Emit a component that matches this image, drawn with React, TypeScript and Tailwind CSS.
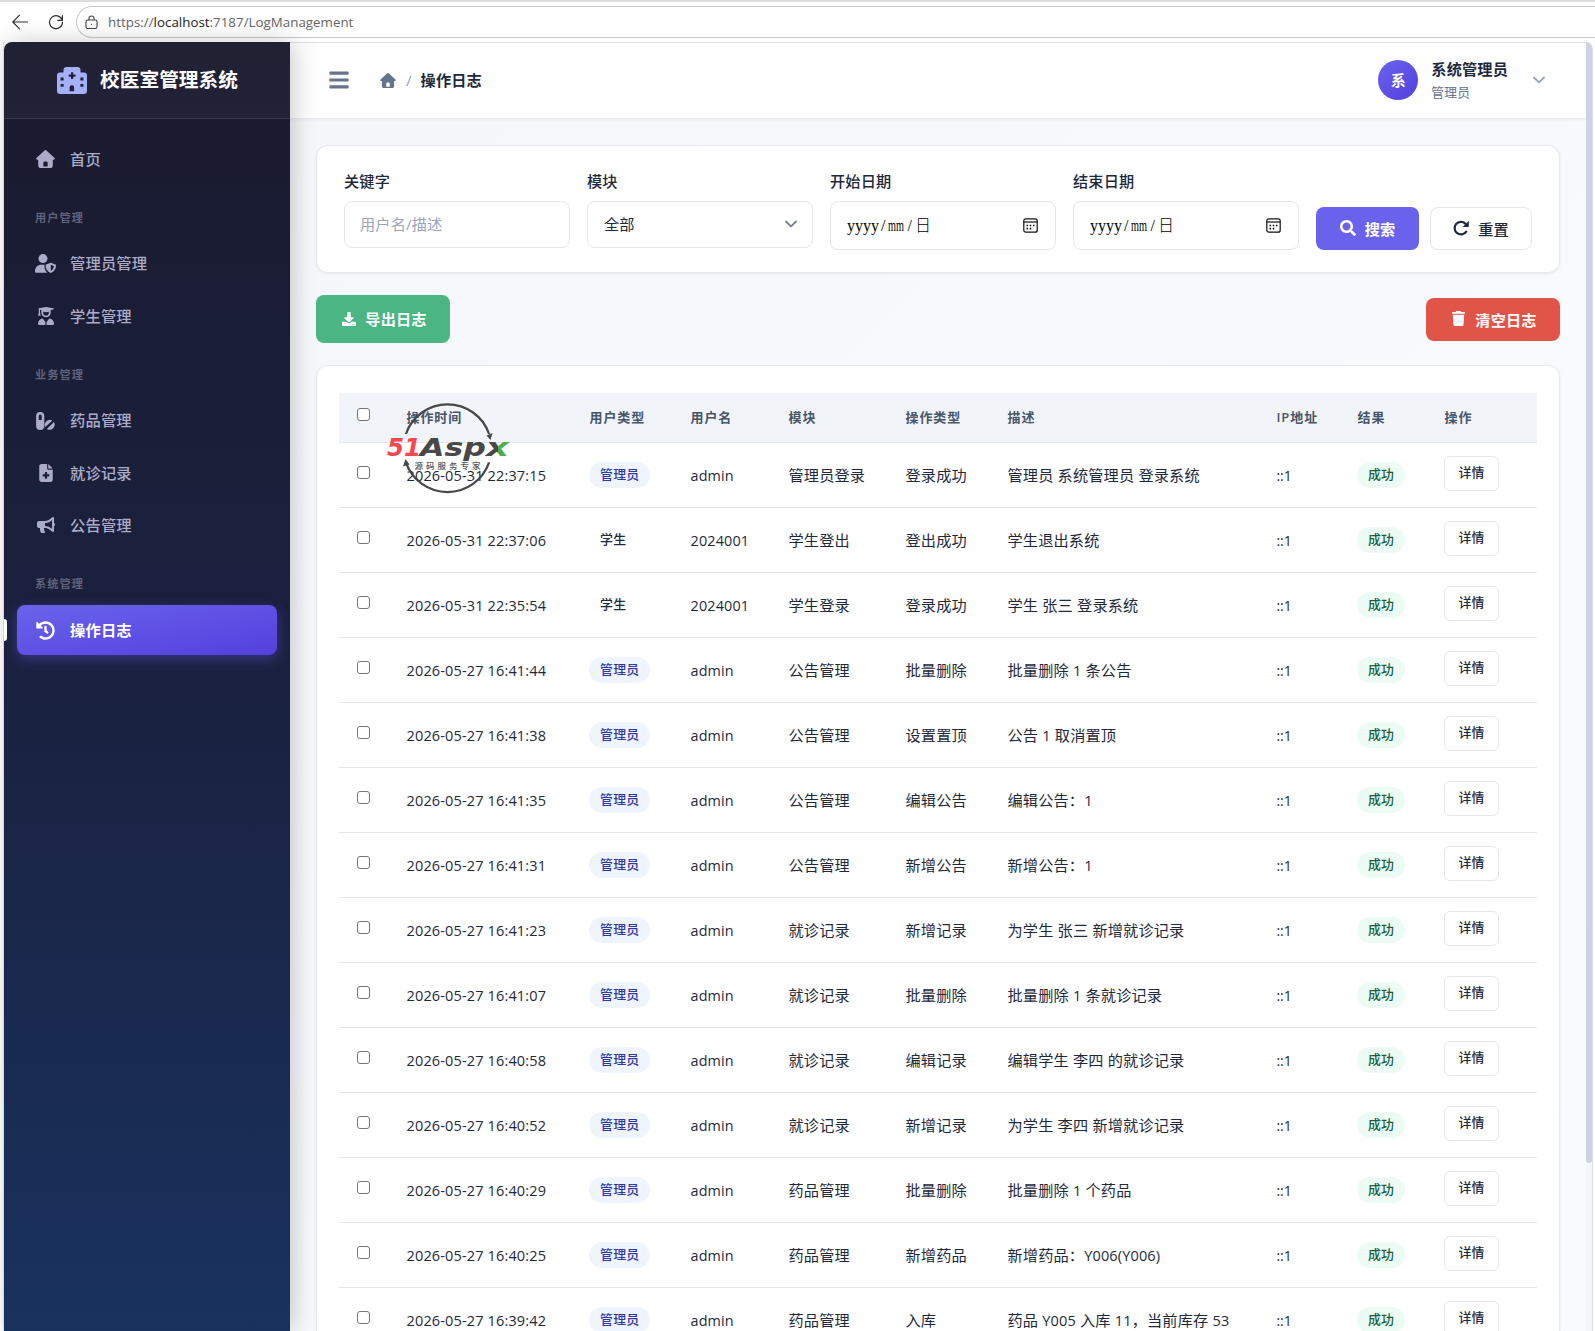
import type { ReactNode } from 'react'
import { FaBars, FaBullhorn, FaDownload, FaHistory, FaSearch } from 'react-icons/fa'
import { FaFileMedical, FaTrash } from 'react-icons/fa6'

type NavEntry = { icon: ReactNode; label: string; active?: boolean }

function HouseIcon({ className }: { className?: string }) {
  return (
    <svg className={className} viewBox="0 0 19 18" fill="currentColor" fillRule="evenodd">
      <path d="M8.600.4a1.300 1.300 0 0 1 1.800 0l8 7.300c.9.8.3 2-.7 2h-.9v6.100a2.200 2.200 0 0 1-2.200 2.200H4.400a2.200 2.200 0 0 1-2.200-2.200V9.700h-.9c-1 0-1.600-1.200-.7-2zM8.400 11.500a1 1 0 0 0-1 1v3.900h4.200v-3.900a1 1 0 0 0-1-1z" />
    </svg>
  )
}

function HospitalIcon() {
  return (
    <svg className="h-[27px] w-[30px] text-[#a5b0fb]" viewBox="0 0 30 27" fill="currentColor" fillRule="evenodd">
      <path d="M6.500 3.300A3.300 3.300 0 0 1 9.800 0h10.400a3.300 3.300 0 0 1 3.300 3.300V5.500h3.200A3.300 3.300 0 0 1 30 8.800v14.900a3.300 3.300 0 0 1-3.300 3.300H3.300A3.300 3.300 0 0 1 0 23.700V8.800a3.300 3.300 0 0 1 3.300-3.300h3.200zM14 5.200v2.300h-2.300v2.200H14V12h2.200V9.700h2.300V7.500h-2.300V5.200zM3.600 10.600v2.800h3v-2.800zM23.400 10.600v2.800h3v-2.800zM3.600 17v2.800h3V17zM23.400 17v2.800h3V17zM14.800 18.200a2.200 2.200 0 0 0-2.200 2.200v3.800h4.500v-3.800a2.200 2.200 0 0 0-2.300-2.200z" />
    </svg>
  )
}

function UserShieldIcon() {
  return (
    <svg className="h-[19px] w-[21px]" viewBox="0 0 21 19" fill="currentColor" fillRule="evenodd">
      <circle cx="8" cy="4.600" r="4.500" />
      <path d="M0 17.400c0-4 2.600-6.600 6.300-6.600h3.200v1.500c0 2.700.9 4.800 2.700 6.400H1.200C.5 18.700 0 18.200 0 17.400z" />
      <path d="M15.800 8.800l4.600 1.700c.4.100.6.500.6.900 0 3.400-1.800 6.100-5.200 7.600-3.400-1.500-5.200-4.200-5.200-7.600 0-.4.200-.8.600-.9zM15.800 10.800v6.100c1.900-1.100 2.900-2.600 3.100-4.900z" />
    </svg>
  )
}

function UserGraduateIcon() {
  return (
    <svg className="h-[18px] w-4" viewBox="0 0 16 18" fill="currentColor" fillRule="evenodd">
      <path d="M8 0l7.400 1.200c.7.200.7 1 0 1.200l-2.700.6v2.600a4.700 4.700 0 0 1-9.400 0V3l-1.300-.3v2.500l.7 3.600H.1l.7-3.600V2.400C.2 2.200.2 1.400.8 1.200zM5.200 4.800v1a2.800 2.800 0 0 0 5.600 0v-1c-1.900.5-3.700.5-5.600 0z" />
      <path d="M4.700 11.500L7.400 15v3H1.200A1.200 1.200 0 0 1 0 16.800c0-2.900 1.900-5 4.700-5.300zM11.300 11.500L8.600 15v3h6.200a1.200 1.200 0 0 0 1.200-1.200c0-2.900-1.900-5-4.700-5.300z" />
    </svg>
  )
}

function PillsIcon() {
  return (
    <svg className="h-[18px] w-[19px]" viewBox="0 0 19 18" fill="currentColor" fillRule="evenodd">
      <path d="M4.200 0a4.100 4.100 0 0 1 4.100 4.100v9.800a4.100 4.100 0 0 1-8.200 0V4.100A4.100 4.100 0 0 1 4.200 0zM4.200 2.600a1.500 1.500 0 0 0-1.500 1.500v4h3v-4a1.500 1.500 0 0 0-1.500-1.500z" />
      <path d="M9.300 15.100a5.100 5.100 0 0 1 7-6.700zM10.900 17a5.100 5.100 0 0 0 7-7z" />
    </svg>
  )
}

function ResetIcon() {
  return (
    <svg className="h-4 w-4" viewBox="0 0 16 16" fill="none">
      <path d="M13.200 11.600A6.300 6.300 0 1 1 12.300 3.600" stroke="currentColor" strokeWidth="2.200" strokeLinecap="round" />
      <path d="M15.800.8v5.400a.7.700 0 0 1-.7.7H9.800z" fill="currentColor" />
    </svg>
  )
}

const groups: { title?: string; items: NavEntry[] }[] = [
  { items: [{ icon: <HouseIcon className="h-[18px] w-[19px]" />, label: '首页' }] },
  {
    title: '用户管理',
    items: [
      { icon: <UserShieldIcon />, label: '管理员管理' },
      { icon: <UserGraduateIcon />, label: '学生管理' },
    ],
  },
  {
    title: '业务管理',
    items: [
      { icon: <PillsIcon />, label: '药品管理' },
      { icon: <FaFileMedical className="text-[18px]" />, label: '就诊记录' },
      { icon: <FaBullhorn className="text-[18px]" />, label: '公告管理' },
    ],
  },
  { title: '系统管理', items: [{ icon: <FaHistory className="text-[19px]" />, label: '操作日志', active: true }] },
]

const logs = [
  { time: '2026-05-31 22:37:15', role: '管理员', user: 'admin', module: '管理员登录', action: '登录成功', desc: '管理员 系统管理员 登录系统' },
  { time: '2026-05-31 22:37:06', role: '学生', user: '2024001', module: '学生登出', action: '登出成功', desc: '学生退出系统' },
  { time: '2026-05-31 22:35:54', role: '学生', user: '2024001', module: '学生登录', action: '登录成功', desc: '学生 张三 登录系统' },
  { time: '2026-05-27 16:41:44', role: '管理员', user: 'admin', module: '公告管理', action: '批量删除', desc: '批量删除 1 条公告' },
  { time: '2026-05-27 16:41:38', role: '管理员', user: 'admin', module: '公告管理', action: '设置置顶', desc: '公告 1 取消置顶' },
  { time: '2026-05-27 16:41:35', role: '管理员', user: 'admin', module: '公告管理', action: '编辑公告', desc: '编辑公告：1' },
  { time: '2026-05-27 16:41:31', role: '管理员', user: 'admin', module: '公告管理', action: '新增公告', desc: '新增公告：1' },
  { time: '2026-05-27 16:41:23', role: '管理员', user: 'admin', module: '就诊记录', action: '新增记录', desc: '为学生 张三 新增就诊记录' },
  { time: '2026-05-27 16:41:07', role: '管理员', user: 'admin', module: '就诊记录', action: '批量删除', desc: '批量删除 1 条就诊记录' },
  { time: '2026-05-27 16:40:58', role: '管理员', user: 'admin', module: '就诊记录', action: '编辑记录', desc: '编辑学生 李四 的就诊记录' },
  { time: '2026-05-27 16:40:52', role: '管理员', user: 'admin', module: '就诊记录', action: '新增记录', desc: '为学生 李四 新增就诊记录' },
  { time: '2026-05-27 16:40:29', role: '管理员', user: 'admin', module: '药品管理', action: '批量删除', desc: '批量删除 1 个药品' },
  { time: '2026-05-27 16:40:25', role: '管理员', user: 'admin', module: '药品管理', action: '新增药品', desc: '新增药品：Y006(Y006)' },
  { time: '2026-05-27 16:39:42', role: '管理员', user: 'admin', module: '药品管理', action: '入库', desc: '药品 Y005 入库 11，当前库存 53' },
]

const headers = ['操作时间', '用户类型', '用户名', '模块', '操作类型', '描述', 'IP地址', '结果', '操作']

function BrowserBar() {
  return (
    <div className="flex h-[42px] items-start border-t-2 border-[#dcdcdc] bg-white pt-1">
      <div className="flex h-8 w-[76px] shrink-0 items-center gap-[20px] pl-3 text-[#333]">
        <svg width="16" height="16" viewBox="0 0 16 16" fill="none" stroke="currentColor" strokeWidth="1.1" strokeLinecap="round" strokeLinejoin="round">
          <path d="M15.500 8H.8M7.500 1.200.8 8l6.700 6.800" />
        </svg>
        <svg width="16" height="16" viewBox="0 0 16 16" fill="none" stroke="currentColor" strokeWidth="1.200" strokeLinecap="round" strokeLinejoin="round">
          <path d="M14.200 6.200A6.500 6.500 0 1 0 14.500 8M14.400 1.500v4.800H9.800" />
        </svg>
      </div>
      <div className="flex h-8 flex-1 items-center rounded-l-full border border-r-0 border-[#c9c9c9] pl-2">
        <svg width="13" height="15" viewBox="0 0 13 15" fill="none" stroke="#444" strokeWidth="1.1">
          <rect x="1" y="5" width="11" height="8.500" rx="1.800" />
          <path d="M4 5V3.500a2.500 2.500 0 0 1 5 0V5" />
          <circle cx="6.500" cy="9.300" r=".6" fill="#444" stroke="none" />
        </svg>
        <span className="mt-px ml-[10px] text-[13.3px] leading-none tracking-[0.03px] text-[#666]">
          https://<span className="text-[#1c1c1c]">localhost</span>:7187/LogManagement
        </span>
      </div>
    </div>
  )
}

function NavItem({ icon, label, active }: NavEntry) {
  return (
    <a
      className={
        active
          ? 'relative mx-[13px] flex h-[50px] items-center rounded-lg bg-gradient-to-br from-[#6a62ec] to-[#543fdd] pl-[17px] text-[15.3px] font-semibold tracking-[0.15px] text-white shadow-[0_4px_14px_rgba(99,91,235,0.4)]'
          : 'mx-[13px] flex h-[50px] items-center pl-[17px] text-[15.3px] font-medium tracking-[0.15px] text-[#acacc8]'
      }
    >
      {active && <span className="absolute top-[14px] -left-[13px] h-[22px] w-[3px] rounded-r bg-white" />}
      <span className="flex w-[23px] justify-center">{icon}</span>
      <span className="ml-[13px]">{label}</span>
    </a>
  )
}

function Sidebar() {
  return (
    <aside className="relative z-10 w-[286px] shrink-0 overflow-hidden rounded-tl-lg bg-gradient-to-b from-[#1a1a2e] via-[#1a2140] to-[#18325e] shadow-[4px_0_24px_rgba(0,0,0,0.2)]">
      <div className="flex h-[77px] items-center justify-center gap-[13px] border-b border-white/10 bg-white/3 pl-px">
        <HospitalIcon />
        <span className="text-[19.7px] font-bold text-white">校医室管理系统</span>
      </div>
      <nav className="pt-[15px]">
        {groups.map((group) => (
          <div key={group.title ?? group.items[0].label} className="flex flex-col gap-[2.3px]">
            {group.title && (
              <div className="flex h-[52.5px] items-end pb-[11px] pl-[31px] text-[11.2px] leading-4 font-semibold tracking-[1.1px] text-[#61627a]">
                {group.title}
              </div>
            )}
            {group.items.map((item) => (
              <NavItem key={item.label} {...item} />
            ))}
          </div>
        ))}
      </nav>
    </aside>
  )
}

function Chevron({ className }: { className?: string }) {
  return (
    <svg className={className} width="12" height="8" viewBox="0 0 12 8" fill="none" stroke="currentColor" strokeWidth="1.800" strokeLinecap="round" strokeLinejoin="round">
      <path d="M1 1.500 6 6.300l5-4.800" />
    </svg>
  )
}

function TopBar() {
  return (
    <header className="flex h-[76px] shrink-0 items-center border-b border-[#e9ebf2] bg-[#fefefe] pr-[41px] pb-px pl-[38px] shadow-[0_1px_3px_rgba(0,0,0,0.05)]">
      <FaBars className="text-[22px] text-[#64748b]" />
      <HouseIcon className="ml-[30px] h-[15px] w-4 text-[#64748b]" />
      <span className="ml-[10px] text-[15.2px] text-[#94a3b8]">/</span>
      <span className="ml-[9px] text-[15.2px] font-semibold tracking-[0.15px] text-[#1e293b]">操作日志</span>
      <div className="ml-auto flex items-center">
        <div className="flex h-10 w-10 items-center justify-center rounded-full bg-gradient-to-br from-[#6a62ec] to-[#543fdd] text-[15px] font-bold text-white">
          系
        </div>
        <div className="ml-[13px] pt-px">
          <div className="text-[15.2px] leading-[23px] font-semibold tracking-[0.15px] text-[#1e293b]">系统管理员</div>
          <div className="text-[12.8px] leading-[23px] tracking-[0.15px] text-[#64748b]">管理员</div>
        </div>
        <Chevron className="ml-[25px] text-[#94a3b8]" />
      </div>
    </header>
  )
}

function DateBox() {
  return (
    <div className="flex h-[48.5px] items-center justify-between rounded-lg border border-[#e5e7eb] pt-px pr-[17px] pl-4 font-['Liberation_Serif','Noto_Sans_CJK_SC',serif] text-[16px] tracking-normal text-black">
      <span className="flex items-center">
        <span>yyyy</span>
        <span className="ml-[2px]">/</span>
        <span className="ml-[3px] w-4">
          <span className="inline-block origin-left scale-x-[0.64]">mm</span>
        </span>
        <span className="ml-[3px]">/</span>
        <span className="ml-[3px] font-light">日</span>
      </span>
      <svg width="15" height="15" viewBox="0 0 15 15" fill="none" stroke="#111" strokeWidth="1.200">
        <rect x=".8" y=".8" width="13.400" height="13.400" rx="2" />
        <path d="M.8 4h13.400" />
        <path d="M6.700 7.500h1.600M9.900 7.500h1.600M3.500 7.500h1.600M3.500 10.600h1.600M6.700 10.600h1.600" strokeWidth="1.600" />
      </svg>
    </div>
  )
}

function Field({ label, children }: { label: string; children: ReactNode }) {
  return (
    <div className="w-[226px]">
      <div className="mb-[9px] text-[15.2px] leading-[22px] font-medium text-[#1e293b]">{label}</div>
      {children}
    </div>
  )
}

function Filters() {
  return (
    <section className="flex h-[128px] items-start gap-[17px] rounded-xl border border-[#e6e9f0] bg-white pt-6 pl-[27px] tracking-[0.15px] shadow-[0_1px_3px_rgba(0,0,0,0.07)]">
      <Field label="关键字">
        <div className="flex h-[46.5px] items-center rounded-lg border border-[#e5e7eb] pl-[15px] text-[15.2px] text-[#9aa5b8]">用户名/描述</div>
      </Field>
      <Field label="模块">
        <div className="flex h-[46.5px] items-center justify-between rounded-lg border border-[#e5e7eb] pr-[15px] pl-4 text-[15.2px] text-[#1e293b]">
          全部
          <Chevron className="text-[#777f8e]" />
        </div>
      </Field>
      <Field label="开始日期">
        <DateBox />
      </Field>
      <Field label="结束日期">
        <DateBox />
      </Field>
      <div className="mt-[37px] flex gap-[11px]">
        <button className="flex h-[43px] w-[103px] items-center justify-center gap-[9px] rounded-lg bg-[#6a62ec] text-[15.2px] font-semibold text-white">
          <FaSearch className="mb-px text-[16px]" />
          <span className="pt-[2px]">搜索</span>
        </button>
        <button className="flex h-[43px] w-[102px] items-center justify-center gap-[9px] rounded-lg border border-[#e5e7eb] bg-white text-[15.2px] font-medium text-[#1e293b]">
          <span className="mb-[2px]">
            <ResetIcon />
          </span>
          <span className="pt-[2px]">重置</span>
        </button>
      </div>
    </section>
  )
}

function Box() {
  return <span className="block h-[13px] w-[13px] rounded-[3px] border border-[#767676] bg-white" />
}

// Numbers and latin text run slightly smaller than the chinese glyphs beside them.
function Mixed({ text }: { text: string }) {
  return text.split(/([A-Za-z0-9()]+)/).map((part, i) =>
    i % 2 ? (
      <span key={i} className="text-[14.5px]">
        {part}
      </span>
    ) : (
      part
    ),
  )
}

function LogTable() {
  return (
    <table className="w-[1198px] table-fixed border-collapse text-left text-[15.2px] tracking-[0.15px] whitespace-nowrap text-[#1e293b]">
      <colgroup>
        <col className="w-[50px]" />
        <col className="w-[183px]" />
        <col className="w-[101px]" />
        <col className="w-[98px]" />
        <col className="w-[117px]" />
        <col className="w-[102px]" />
        <col className="w-[269px]" />
        <col className="w-[81px]" />
        <col className="w-[87px]" />
        <col className="w-[110px]" />
      </colgroup>
      <thead>
        <tr className="h-[49px] border-b border-[#e2e5ea] bg-[#f1f4f8] text-[13px] tracking-[0.9px] text-[#475569]">
          <th className="pb-[6px] pl-[18px]">
            <Box />
          </th>
          {headers.map((h) => (
            <th key={h} className="pl-[17.5px] font-semibold">
              {h}
            </th>
          ))}
        </tr>
      </thead>
      <tbody>
        {logs.map((log) => (
          <tr key={log.time} className="h-[65px] border-b border-[#e2e5ea]">
            <td className="pb-1 pl-[18px]">
              <Box />
            </td>
            <td className="pt-[2px] pl-[17.5px] text-[14.5px]">{log.time}</td>
            <td className="pl-[17px]">
              <span
                className={
                  log.role === '管理员'
                    ? 'inline-flex h-[26px] items-center rounded-full bg-[#eff5ff] px-[11px] align-middle text-[12.9px] font-medium tracking-[0.25px] text-[#3237a0]'
                    : 'inline-flex h-[26px] items-center px-[11px] align-middle text-[12.9px] font-medium tracking-[0.25px]'
                }
              >
                {log.role}
              </span>
            </td>
            <td className="pt-[2px] pl-[17.5px] text-[14.4px]">{log.user}</td>
            <td className="pt-px pl-[17.5px]">{log.module}</td>
            <td className="pt-px pl-[17.5px]">{log.action}</td>
            <td className="pt-px pl-[17.5px]">
              <Mixed text={log.desc} />
            </td>
            <td className="pt-[2px] pl-[17.5px] text-[14px] tracking-[-0.1px]">::1</td>
            <td className="pl-[17px]">
              <span className="inline-flex h-[26px] items-center rounded-full bg-[#ecfcf4] px-[11px] align-middle text-[12.9px] font-medium text-[#17603f]">成功</span>
            </td>
            <td className="pb-[3px] pl-[17px]">
              <button className="flex h-[35px] w-[55px] items-center justify-center rounded-md border border-[#e5e7eb] text-[12.9px] font-medium">详情</button>
            </td>
          </tr>
        ))}
      </tbody>
    </table>
  )
}

function Watermark() {
  return (
    <svg className="absolute top-[398px] left-[384px]" width="130" height="100" viewBox="0 0 130 100">
      <defs>
        <linearGradient id="letter" x1="0" x2="1" y1="0" y2="0">
          <stop offset="0.550" stopColor="#484848" />
          <stop offset="0.550" stopColor="#4fae4c" />
        </linearGradient>
      </defs>
      <g fill="none" stroke="#484848" strokeWidth="2.300">
        <path d="M21.900 36A44 44 0 0 1 105.100 36" />
        <path d="M21.900 64.400A44 44 0 0 0 105.100 64.400" />
      </g>
      <path d="M102.500 37.500 108.500 35 106.500 42ZM19 68.500 21.500 61 25.500 66.500Z" fill="#484848" />
      <g fontFamily="DejaVu Sans, sans-serif" fontWeight="700" fontStyle="italic" fontSize="25">
        <text x="3" y="58" fill="#f6474d" textLength="34" lengthAdjust="spacingAndGlyphs">
          51
        </text>
        <text x="36" y="58" fill="#484848" textLength="66" lengthAdjust="spacingAndGlyphs">
          Asp
        </text>
        <text x="102" y="58" fill="url(#letter)" textLength="23" lengthAdjust="spacingAndGlyphs">
          x
        </text>
      </g>
      <text x="30.500" y="70.500" fill="#555" fontSize="8.500" fontWeight="500" textLength="66">
        源码服务专家
      </text>
    </svg>
  )
}

export default function App() {
  return (
    <div className="relative flex h-[1331px] w-[1595px] flex-col overflow-hidden bg-white font-['Open_Sans','Noto_Sans_CJK_SC',sans-serif]">
      <BrowserBar />
      <div className="ml-[3px] flex min-h-0 flex-1 border-l border-[#dfe5ee]">
        <Sidebar />
        <div className="flex w-[1296px] shrink-0 flex-col overflow-hidden border-t border-[#e0e0e0] bg-gradient-to-br from-[#f5f7fb] to-[#f9fbfd]">
          <TopBar />
          <main className="flex flex-col px-[26px] pt-[26px]">
            <Filters />
            <div className="mt-[22px] flex items-center justify-between tracking-[0.15px]">
              <button className="flex h-[48px] w-[134px] items-center justify-center gap-[9px] rounded-lg bg-[#4bb583] pl-[3px] text-[15.2px] font-semibold text-white">
                <FaDownload className="text-[14px]" />
                导出日志
              </button>
              <button className="flex h-[43px] w-[134px] items-center justify-center gap-[9px] rounded-lg bg-[#e15549] pl-[2px] text-[15.2px] font-semibold text-white">
                <FaTrash className="mb-px text-[15px]" />
                <span className="pt-[2px]">清空日志</span>
              </button>
            </div>
            <section className="mt-[22px] h-[1100px] rounded-xl border border-[#e6e9f0] bg-white px-[22px] pt-[27px] shadow-[0_1px_3px_rgba(0,0,0,0.07)]">
              <LogTable />
            </section>
          </main>
        </div>
        <div className="w-[7px] shrink-0 rounded-tr-lg border-r border-[#dcdce4] bg-[#f4f5fa]">
          <div className="h-[1121px] rounded-tr-lg rounded-b bg-[#d0d2e4]" />
        </div>
      </div>
      <Watermark />
    </div>
  )
}
